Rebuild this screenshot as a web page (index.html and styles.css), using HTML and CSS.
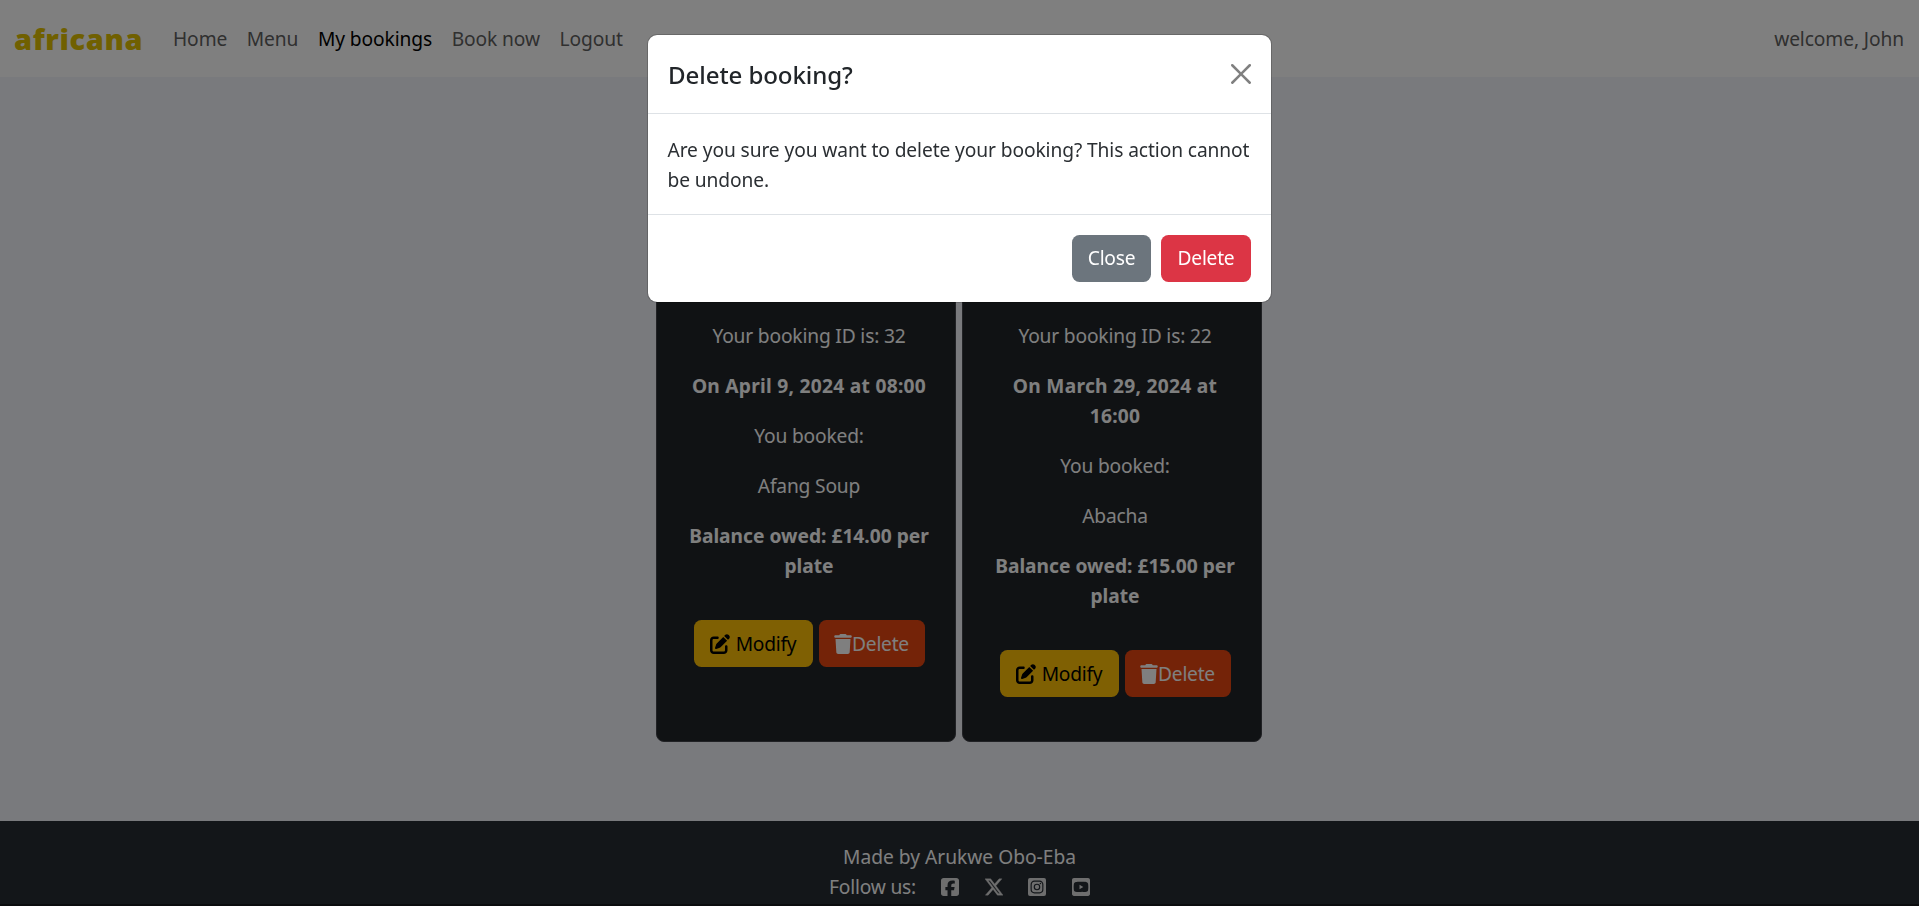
FILE: index.html
```html
<!DOCTYPE html>
<html lang="en">
<head>
<meta charset="utf-8">
<title>africana - My bookings</title>
<link rel="stylesheet" href="styles.css">
</head>
<body>
<svg width="0" height="0" class="sprite">
  <symbol id="pen" viewBox="0 0 512 512"><path d="M471.6 21.7c-21.9-21.9-57.3-21.9-79.2 0L362.3 51.7l97.9 97.9 30.1-30.1c21.9-21.9 21.9-57.3 0-79.2L471.6 21.7zm-299.2 220c-6.1 6.1-10.8 13.6-13.5 21.9l-29.6 88.8c-2.9 8.6-.6 18.1 5.8 24.6s15.9 8.7 24.6 5.8l88.8-29.6c8.2-2.7 15.7-7.4 21.9-13.5L437.7 172.3 339.7 74.3 172.4 241.7zM96 64C43 64 0 107 0 160V416c0 53 43 96 96 96H352c53 0 96-43 96-96V320c0-17.7-14.3-32-32-32s-32 14.3-32 32v96c0 17.7-14.3 32-32 32H96c-17.7 0-32-14.3-32-32V160c0-17.7 14.3-32 32-32h96c17.7 0 32-14.3 32-32s-14.3-32-32-32H96z"/></symbol>
  <symbol id="trash" viewBox="0 0 448 512"><path d="M135.2 17.7L128 32H32C14.3 32 0 46.3 0 64S14.3 96 32 96H416c17.7 0 32-14.3 32-32s-14.3-32-32-32H320l-7.2-14.3C307.4 6.8 296.3 0 284.2 0H163.8c-12.1 0-23.2 6.8-28.6 17.7zM416 128H32L53.2 467c1.6 25.3 22.6 45 47.9 45H346.9c25.3 0 46.3-19.7 47.9-45L416 128z"/></symbol>
</svg>

<div class="page">
  <nav class="navbar">
    <a class="brand">africana</a>
    <ul class="nav">
      <li>Home</li>
      <li>Menu</li>
      <li class="active">My bookings</li>
      <li>Book now</li>
      <li>Logout</li>
    </ul>
    <span class="welcome">welcome, John</span>
  </nav>

  <main class="bookings">
    <article class="card">
      <p>Your booking ID is: 32</p>
      <p class="strong date">On April 9, 2024 at 08:00</p>
      <p>You booked:</p>
      <p>Afang Soup</p>
      <p class="strong owed">Balance owed: £14.00 per plate</p>
      <div class="actions">
        <button class="btn modify"><svg class="pen"><use href="#pen"/></svg><span>Modify</span></button>
        <button class="btn remove"><svg class="trash"><use href="#trash"/></svg><span>Delete</span></button>
      </div>
    </article>
    <article class="card">
      <p>Your booking ID is: 22</p>
      <p class="strong date">On March 29, 2024 at 16:00</p>
      <p>You booked:</p>
      <p>Abacha</p>
      <p class="strong owed">Balance owed: £15.00 per plate</p>
      <div class="actions">
        <button class="btn modify"><svg class="pen"><use href="#pen"/></svg><span>Modify</span></button>
        <button class="btn remove"><svg class="trash"><use href="#trash"/></svg><span>Delete</span></button>
      </div>
    </article>
  </main>

  <footer class="footer">
    <div class="made">Made by Arukwe Obo-Eba</div>
    <div class="follow">
      <span>Follow us:</span>
      <svg viewBox="0 32 448 448"><path d="M64 32C28.7 32 0 60.7 0 96V416c0 35.3 28.7 64 64 64h98.2V334.2H109.4V256h52.8V222.3c0-87.1 39.4-127.5 125-127.5 16.2 0 44.2 3.2 55.7 6.4V172c-6-.6-16.5-1-29.6-1-42 0-58.2 15.9-58.2 57.2V256h83.6l-14.4 78.2H255V480H384c35.3 0 64-28.7 64-64V96c0-35.3-28.7-64-64-64H64z"/></svg>
      <svg class="x" viewBox="27 26 460 460"><path d="M389.2 48h70.6L305.6 224.2 487 464H345L233.7 318.6 106.5 464H35.8L200.7 275.5 26.8 48H172.4L272.9 180.9 389.2 48zM364.4 421.8h39.1L151.1 88h-42L364.4 421.8z"/></svg>
      <svg viewBox="0 32 448 448"><path d="M224 202.66A53.34 53.34 0 1 0 277.36 256 53.38 53.38 0 0 0 224 202.66zm124.71-41a54 54 0 0 0-30.41-30.41c-21-8.29-71-6.43-94.3-6.43s-73.25-1.93-94.31 6.43a54 54 0 0 0-30.41 30.41c-8.28 21-6.43 71.05-6.43 94.33s-1.85 73.27 6.47 94.34a54 54 0 0 0 30.41 30.41c21 8.29 71 6.43 94.31 6.43s73.24 1.93 94.3-6.43a54 54 0 0 0 30.41-30.41c8.35-21 6.43-71.05 6.43-94.33s1.92-73.26-6.43-94.33zM224 338a82 82 0 1 1 82-82 81.9 81.9 0 0 1-82 82zm85.38-148.3a19.14 19.14 0 1 1 19.13-19.14 19.1 19.1 0 0 1-19.09 19.18zM400 32H48A48 48 0 0 0 0 80v352a48 48 0 0 0 48 48h352a48 48 0 0 0 48-48V80a48 48 0 0 0-48-48zm-17.12 290c-1.29 25.63-7.14 48.34-25.85 67s-41.4 24.63-67 25.85c-26.41 1.49-105.59 1.49-132 0-25.63-1.29-48.26-7.15-67-25.85s-24.63-41.42-25.85-67c-1.49-26.42-1.49-105.61 0-132 1.29-25.63 7.07-48.34 25.85-67s41.47-24.56 67-25.78c26.41-1.49 105.59-1.49 132 0 25.63 1.29 48.33 7.15 67 25.85s24.63 41.42 25.85 67.05c1.49 26.32 1.49 105.44 0 131.88z"/></svg>
      <svg viewBox="0 32 448 448"><path d="M186.8 202.1l95.2 54.1-95.2 54.1V202.1zM448 80v352c0 26.5-21.5 48-48 48H48c-26.5 0-48-21.5-48-48V80c0-26.5 21.5-48 48-48h352c26.5 0 48 21.5 48 48zm-42 176.3s0-59.6-7.6-88.2c-4.2-15.8-16.5-28.2-32.2-32.4C337.9 128 224 128 224 128s-113.9 0-142.2 7.7c-15.7 4.2-28 16.6-32.2 32.4-7.6 28.5-7.6 88.2-7.6 88.2s0 59.6 7.6 88.2c4.2 15.8 16.5 27.7 32.2 31.9C110.1 384 224 384 224 384s113.9 0 142.2-7.7c15.7-4.2 28-16.1 32.2-31.9 7.6-28.5 7.6-88.1 7.6-88.1z"/></svg>
    </div>
  </footer>
</div>

<div class="backdrop">
  <div class="modal">
    <div class="modal-header">
      <h5>Delete booking?</h5>
      <svg class="close" viewBox="0 0 16 16"><path d="M.293.293a1 1 0 0 1 1.414 0L8 6.586 14.293.293a1 1 0 1 1 1.414 1.414L9.414 8l6.293 6.293a1 1 0 0 1-1.414 1.414L8 9.414l-6.293 6.293a1 1 0 0 1-1.414-1.414L6.586 8 .293 1.707a1 1 0 0 1 0-1.414z"/></svg>
    </div>
    <div class="modal-body">Are you sure you want to delete your booking? This action cannot<br>be undone.</div>
    <div class="modal-footer">
      <button class="btn secondary">Close</button>
      <button class="btn danger">Delete</button>
    </div>
  </div>
</div>
</body>
</html>
```
FILE: styles.css
```css
* { box-sizing: border-box; }
html, body { height: 100%; overflow: hidden; }
body {
  margin: 0;
  font-family: "Noto Sans", "Open Sans", sans-serif;
  font-size: 19.2px;
  line-height: 30px;
  letter-spacing: -0.1px;
  color: #212529;
}
.sprite { position: absolute; }
svg { fill: currentColor; flex: none; }
.page { height: 906px; display: flex; flex-direction: column; background: #f3f4fa; }

.navbar {
  height: 77px;
  flex: none;
  display: flex;
  align-items: center;
  padding: 0 15px 0 14px;
  background: #fff;
  color: #606060;
}
.brand { width: 159px; font-family: "Open Sans", sans-serif; font-weight: 800; font-size: 29px; color: #e0c000; letter-spacing: 0.6px; }
.nav { display: flex; gap: 19.6px; margin: 0; padding: 0; list-style: none; white-space: nowrap; }
.nav .active { color: #000; }
.welcome { margin-left: auto; }

.bookings { flex: 1; display: flex; justify-content: center; gap: 6.5px; padding: 214px 1px 79px 0; }
.card {
  width: 299.5px;
  padding: 29px 20px 0 26px;
  border: 1px solid #43444a;
  border-radius: 8px;
  background: #212529;
  color: #fff;
  text-align: center;
}
.card p { margin: 0 0 20px; letter-spacing: -0.17px; }
.card .strong { font-weight: 700; letter-spacing: 0; }
.card .date { letter-spacing: 0.27px; }
.card .owed { margin-bottom: 39px; }
.actions { display: flex; justify-content: center; gap: 6px; }
.btn {
  height: 47px;
  display: flex;
  align-items: center;
  justify-content: center;
  padding: 0;
  border: 0;
  border-radius: 7.5px;
  font: inherit;
  letter-spacing: -0.25px;
}
.modify { width: 119px; gap: 6px; background: #ffc107; color: #000; }
.remove { width: 106px; background: #e84610; color: #fff; }
.pen { width: 20px; height: 20px; }
.trash { width: 18px; height: 20px; }

.footer {
  height: 85px;
  flex: none;
  display: flex;
  flex-direction: column;
  align-items: center;
  padding-top: 21px;
  background: #262c33;
  border-bottom: 2px solid #16181c;
  color: #fff;
}
.made { letter-spacing: 0; }
.follow { display: flex; align-items: center; gap: 25.5px; letter-spacing: -0.2px; }
.follow svg { width: 18px; height: 18px; fill: #dcdcdc; }
.follow .x { stroke: #dcdcdc; stroke-width: 10px; }

.backdrop { position: fixed; inset: 0; display: flex; justify-content: center; align-items: flex-start; padding-top: 34px; background: rgba(0,0,0,.5); }
.modal { width: 625px; background: #fff; background-clip: padding-box; border: 1px solid rgba(0,0,0,.18); border-radius: 10px; }
.modal-header { height: 79px; display: flex; align-items: center; justify-content: space-between; padding: 0 20px; border-bottom: 1px solid #dee2e6; }
.modal-header h5 { margin: 0; padding-top: 2px; font-size: 24.1px; font-weight: 500; }
.close { width: 20px; height: 20px; fill: #808080; }
.modal-body { height: 100px; padding: 21px 19.5px 19px; color: #2b2f33; white-space: nowrap; }
.modal-footer { height: 88px; display: flex; align-items: center; justify-content: flex-end; gap: 10px; padding: 0 20px 1px; border-top: 1px solid #dee2e6; }
.secondary { width: 79px; background: #6c757d; color: #fff; }
.danger { width: 90px; background: #dc3545; color: #fff; }
```
